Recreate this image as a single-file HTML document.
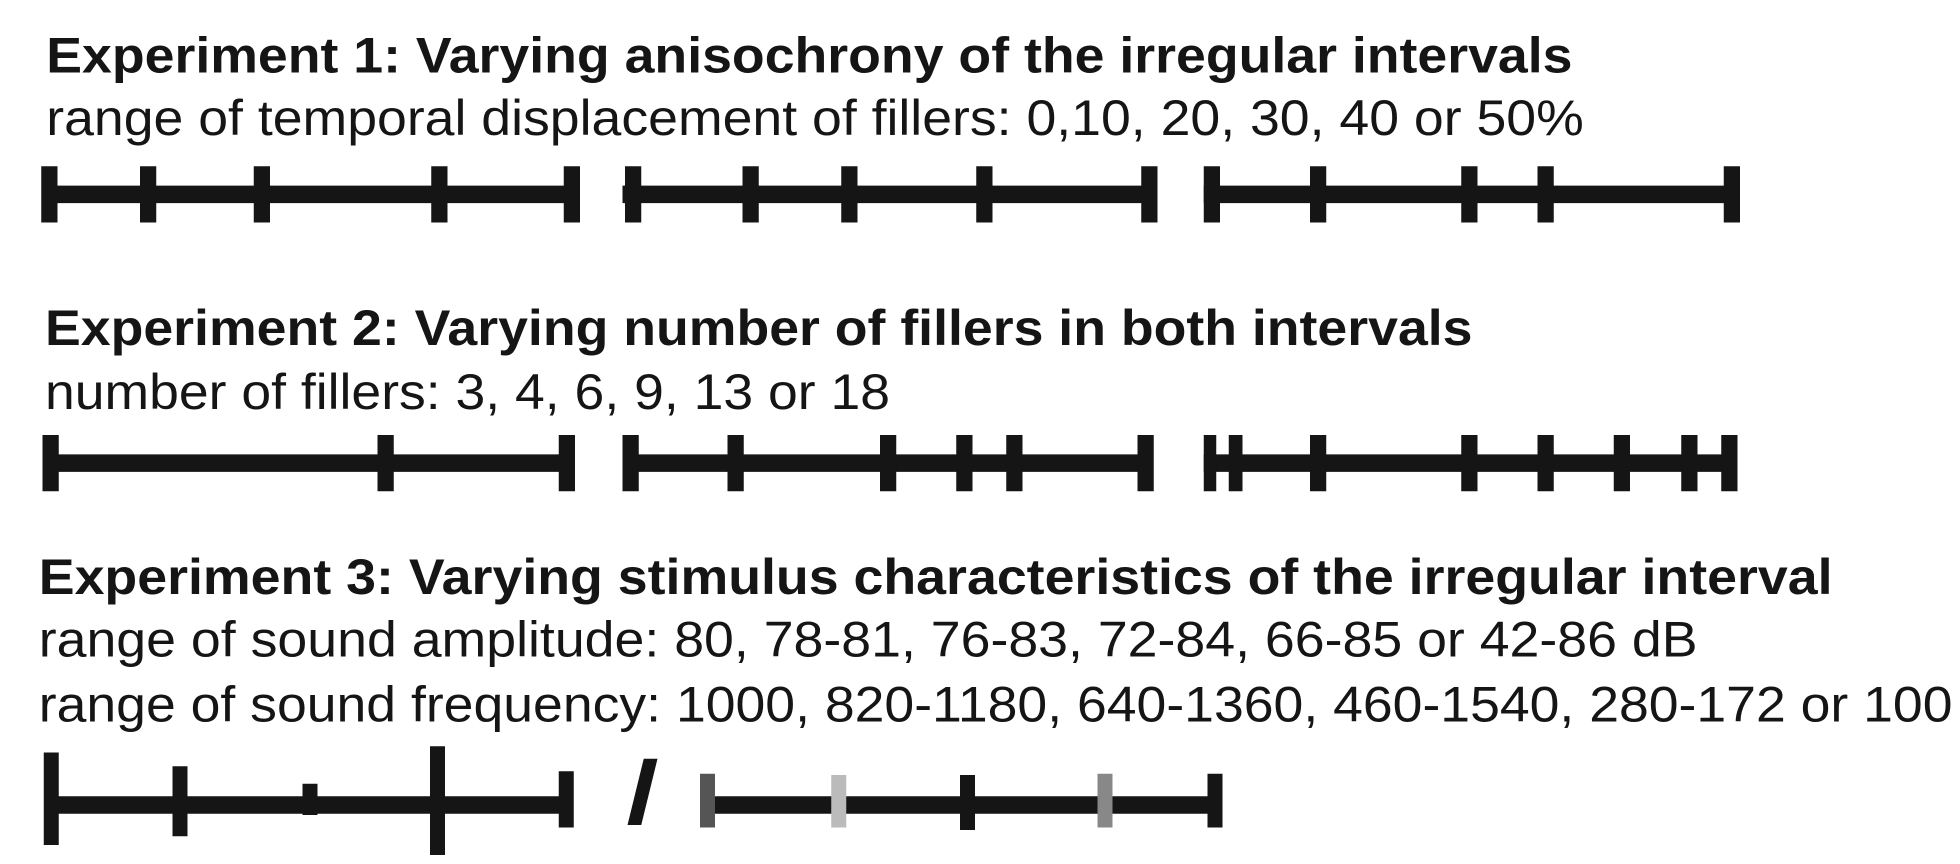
<!DOCTYPE html>
<html><head><meta charset="utf-8"><style>html,body{margin:0;padding:0;background:#fff;width:1960px;height:864px;overflow:hidden}svg{display:block}</style></head>
<body>
<svg width="1960" height="864" viewBox="0 0 1568 691.2" xmlns="http://www.w3.org/2000/svg" font-family="Liberation Sans, Arial, sans-serif" fill="#151515">
<g font-size="40">
<text x="37" y="58" font-weight="bold" textLength="1221" lengthAdjust="spacingAndGlyphs">Experiment 1: Varying anisochrony of the irregular intervals</text>
<text x="37" y="108" textLength="1230" lengthAdjust="spacingAndGlyphs">range of temporal displacement of fillers: 0,10, 20, 30, 40 or 50%</text>
<text x="36" y="276" font-weight="bold" textLength="1142" lengthAdjust="spacingAndGlyphs">Experiment 2: Varying number of fillers in both intervals</text>
<text x="36" y="327" textLength="676" lengthAdjust="spacingAndGlyphs">number of fillers: 3, 4, 6, 9, 13 or 18</text>
<text x="31" y="475" font-weight="bold" textLength="1435" lengthAdjust="spacingAndGlyphs">Experiment 3: Varying stimulus characteristics of the irregular interval</text>
<text x="31" y="525" textLength="1327" lengthAdjust="spacingAndGlyphs">range of sound amplitude: 80, 78-81, 76-83, 72-84, 66-85 or 42-86 dB</text>
<text x="31" y="577" textLength="1531" lengthAdjust="spacingAndGlyphs">range of sound frequency: 1000, 820-1180, 640-1360, 460-1540, 280-172 or 100</text>
</g>
<!-- row 1 -->
<g>
<rect x="39" y="148.5" width="418" height="14"/>
<rect x="33" y="133" width="13" height="45"/><rect x="112" y="133" width="13" height="45"/><rect x="203" y="133" width="13" height="45"/><rect x="345" y="133" width="13" height="45"/><rect x="451" y="133" width="13" height="45"/>
<rect x="498" y="148.5" width="421" height="14"/>
<rect x="500" y="133" width="13" height="45"/><rect x="594" y="133" width="13" height="45"/><rect x="673" y="133" width="13" height="45"/><rect x="781" y="133" width="13" height="45"/><rect x="913" y="133" width="13" height="45"/>
<rect x="963" y="148.5" width="422" height="14"/>
<rect x="963" y="133" width="13" height="45"/><rect x="1048" y="133" width="13" height="45"/><rect x="1169" y="133" width="13" height="45"/><rect x="1230" y="133" width="13" height="45"/><rect x="1379" y="133" width="13" height="45"/>
</g>
<!-- row 2 -->
<g>
<rect x="40" y="363.5" width="413" height="14"/>
<rect x="34" y="348" width="13" height="45"/><rect x="302" y="348" width="13" height="45"/><rect x="447" y="348" width="13" height="45"/>
<rect x="498" y="363.5" width="418" height="14"/>
<rect x="498" y="348" width="13" height="45"/><rect x="582" y="348" width="13" height="45"/><rect x="704" y="348" width="13" height="45"/><rect x="765" y="348" width="13" height="45"/><rect x="805" y="348" width="13" height="45"/><rect x="910" y="348" width="13" height="45"/>
<rect x="963" y="363.5" width="420" height="14"/>
<rect x="963" y="348" width="10" height="45"/><rect x="983" y="348" width="11" height="45"/><rect x="1048" y="348" width="13" height="45"/><rect x="1169" y="348" width="13" height="45"/><rect x="1230" y="348" width="13" height="45"/><rect x="1291" y="348" width="13" height="45"/><rect x="1345" y="348" width="13" height="45"/><rect x="1377" y="348" width="13" height="45"/>
</g>
<!-- row 3 -->
<g>
<rect x="41" y="637" width="412" height="14"/>
<rect x="35" y="602" width="12" height="74"/><rect x="138" y="613" width="12" height="56"/><rect x="242" y="627" width="12" height="25"/><rect x="344" y="597" width="12" height="87"/><rect x="447" y="617" width="12" height="45"/>
<polygon points="515,607 526,607 513,660 502,660"/>
<rect x="566" y="637" width="406" height="14"/>
<rect x="560" y="619" width="12" height="43" fill="#555"/><rect x="665" y="620" width="12" height="42" fill="#bbb"/><rect x="768" y="620" width="12" height="44"/><rect x="878" y="619" width="12" height="43" fill="#888"/><rect x="966" y="619" width="12" height="43"/>
</g>
</svg>
</body></html>
